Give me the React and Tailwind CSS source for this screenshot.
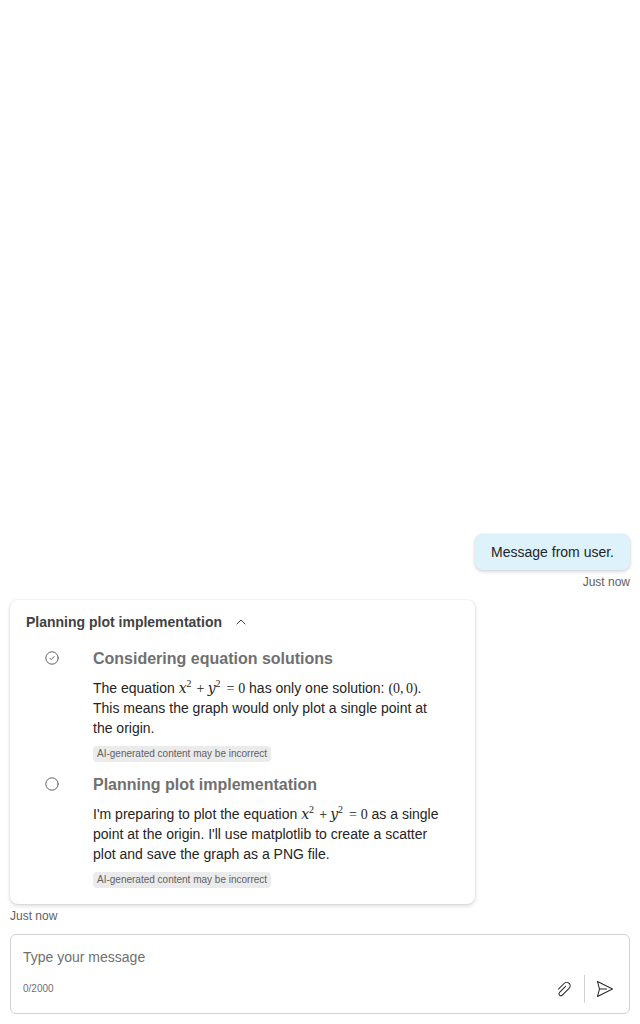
import React from "react";

const shadow = "shadow-[0_0_2px_rgba(0,0,0,0.12),0_2px_4px_rgba(0,0,0,0.14)]";

function Variable({ children }) {
  return <mi className="font-['DejaVu_Serif',serif]">{children}</mi>;
}

function Equation() {
  return (
    <math className="font-['Liberation_Serif',serif]">
      <mrow>
        <msup><Variable>x</Variable><mn>2</mn></msup>
        <mo>+</mo>
        <msup><Variable>y</Variable><mn>2</mn></msup>
        <mo>=</mo>
        <mn>0</mn>
      </mrow>
    </math>
  );
}

function Origin() {
  return (
    <math className="font-['Liberation_Serif',serif]">
      <mrow>
        <mo stretchy="false">(</mo>
        <mn>0</mn>
        <mo separator="true">,</mo>
        <mn>0</mn>
        <mo stretchy="false">)</mo>
      </mrow>
    </math>
  );
}

function StatusIcon({ done }) {
  return (
    <svg width="16" height="16" viewBox="0 0 16 16" fill="none" stroke="#616161" strokeLinecap="round" strokeLinejoin="round">
      <circle cx="8" cy="8" r="6.2" />
      {done && <path d="M5.8 8.2 7.2 9.6 10.2 6.6" />}
    </svg>
  );
}

function Step({ done, title, children }) {
  return (
    <div className="flex h-[126px]">
      <div className="w-[67px] shrink-0 pl-[18px] pt-[10px]">
        <StatusIcon done={done} />
      </div>
      <div className="flex flex-col items-start">
        <h3 className="mt-2 text-base leading-[22px] font-bold text-[#707070]">{title}</h3>
        <div className="mt-2 h-[60px] whitespace-nowrap text-sm leading-5 text-[#242424]">{children}</div>
        <span className="mt-2 h-4 rounded-[4px] bg-[#ebebeb] px-1 text-[10px] leading-4 text-[#616161]">
          AI-generated content may be incorrect
        </span>
      </div>
    </div>
  );
}

export default function App() {
  return (
    <div className="flex h-screen flex-col justify-end bg-white px-[10px] pb-[10px] font-['Liberation_Sans',Arial,sans-serif]">
      <div className={`self-end rounded-lg bg-[#ddf2fb] px-4 py-2 text-sm leading-5 text-[#242424] ${shadow}`}>
        Message from user.
      </div>
      <div className="mt-1 self-end text-xs leading-4 text-[#616161]">Just now</div>

      <section className={`mt-[10px] h-[304px] w-[465px] rounded-lg bg-white px-4 pt-3 ${shadow}`}>
        <div className="flex h-5 items-center gap-[13px] text-sm leading-5 font-bold text-[#424242]">
          Planning plot implementation
          <svg width="12" height="12" viewBox="0 0 12 12" fill="none" stroke="#424242" strokeLinecap="round" strokeLinejoin="round">
            <path d="M2 8 6 4 10 8" />
          </svg>
        </div>
        <div className="mt-2">
          <Step done title="Considering equation solutions">
            <div>The equation <Equation /> has only one solution: <Origin />.</div>
            <div>This means the graph would only plot a single point at</div>
            <div>the origin.</div>
          </Step>
          <Step title="Planning plot implementation">
            <div>I'm preparing to plot the equation <Equation /> as a single</div>
            <div>point at the origin. I'll use matplotlib to create a scatter</div>
            <div>plot and save the graph as a PNG file.</div>
          </Step>
        </div>
      </section>
      <div className="mt-1 text-xs leading-4 text-[#616161]">Just now</div>

      <div className="mt-[10px] flex h-20 flex-col rounded-md border border-[#d1d1d1] bg-white px-3 pt-3">
        <div className="text-sm leading-5 text-[#707070]">Type your message</div>
        <div className="mt-1.5 flex h-8 items-center">
          <span className="text-[10px] leading-[14px] text-[#707070]">0/2000</span>
          <div className="ml-auto mr-0.5 flex items-center">
            <svg width="20" height="20" viewBox="0 0 20 20" fill="#242424">
              <path d="m4.83 10.48 5.65-5.65a3 3 0 0 1 4.25 4.24L8 15.8a1.5 1.5 0 0 1-2.12-2.12l6-6.01a.5.5 0 1 0-.7-.71l-6 6.01a2.5 2.5 0 0 0 3.53 3.54l6.71-6.72a4 4 0 1 0-5.65-5.66L4.12 9.78a.5.5 0 0 0 .7.7Z" />
            </svg>
            <div className="ml-[10px] mr-[10px] h-7 w-px bg-[#d1d1d1]" />
            <svg width="20" height="20" viewBox="0 0 20 20" fill="#242424">
              <path d="M2.18 2.11a.5.5 0 0 1 .54-.06l15 7.5a.5.5 0 0 1 0 .9l-15 7.5a.5.5 0 0 1-.7-.58L3.98 10 2.02 2.63a.5.5 0 0 1 .16-.52Zm2.7 8.39-1.61 6.06L16.38 10 3.27 3.44 4.88 9.5h6.62a.5.5 0 1 1 0 1H4.88Z" />
            </svg>
          </div>
        </div>
      </div>
    </div>
  );
}
